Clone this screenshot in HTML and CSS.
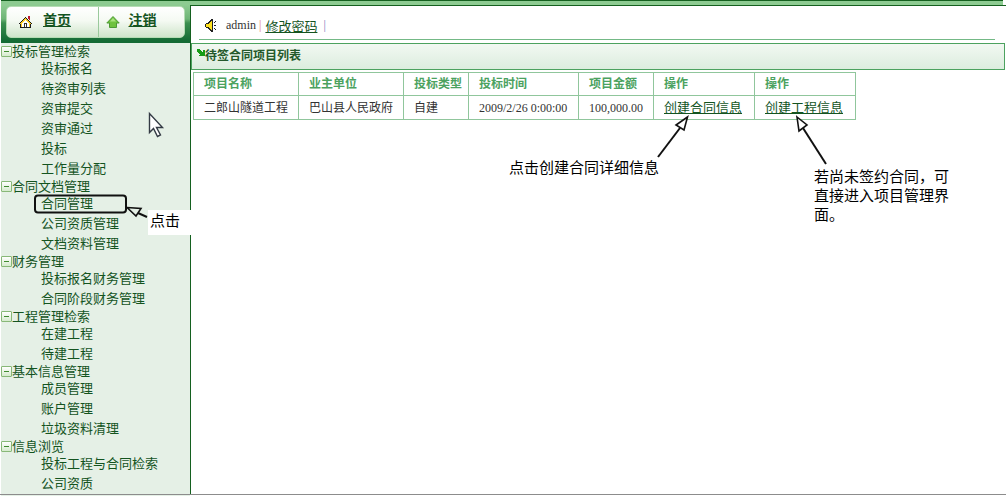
FILE: index.html
```html
<!DOCTYPE html>
<html lang="zh-CN">
<head>
<meta charset="utf-8">
<title>待签合同项目列表</title>
<link rel="stylesheet" href="styles.css">
</head>
<body>
<div class="app">
  <aside class="sidebar">
    <header class="banner">
      <nav class="tabs">
        <a class="tab" href="#">
          <svg class="home-icon" viewBox="0 0 13 12" shape-rendering="crispEdges"><path d="M6 1h1v1h1v1h1v1h1v1h1v1h1v1h1v1h-1v4H1V8H0V7h1V6h1V5h1V4h1V3h1V2h1z" fill="#1c1c1c"/><path d="M6 2h1v1h1v1h1v1h1v1h1v1h1v1h-1v3H2V8H1V7h1V6h1V5h1V4h1V3h1z" fill="#ffcf24"/><path d="M6 4h1v1h1v1h1v1h1v4H3V7h1V6h1V5h1z" fill="#fff"/><path d="M5 7h3v4H7V8H6v3H5z" fill="#333"/><path d="M9 0h2v4h-1V3H9z" fill="#c01830"/></svg>
          <span class="tab-text">首页</span>
        </a>
        <a class="tab" href="#">
          <svg class="up-icon" viewBox="0 0 14 12"><path d="M7 .5 13.200 7H10.500v4.500h-7V7H.8z" fill="#6fc23f" stroke="#4c9a34"/><path d="M7 2 10 5.500H4z" fill="#a9e37f"/></svg>
          <span class="tab-text">注销</span>
        </a>
      </nav>
    </header>
    <nav class="tree">
      <section><h2><button class="fold" aria-label="折叠"></button>投标管理检索</h2>
        <ul><li><a href="#">投标报名</a></li><li><a href="#">待资审列表</a></li><li><a href="#">资审提交</a></li><li><a href="#">资审通过</a></li><li><a href="#">投标</a></li><li><a href="#">工作量分配</a></li></ul></section>
      <section><h2><button class="fold" aria-label="折叠"></button>合同文档管理</h2>
        <ul><li><a class="current" href="#">合同管理</a></li><li><a href="#">公司资质管理</a></li><li><a href="#">文档资料管理</a></li></ul></section>
      <section><h2><button class="fold" aria-label="折叠"></button>财务管理</h2>
        <ul><li><a href="#">投标报名财务管理</a></li><li><a href="#">合同阶段财务管理</a></li></ul></section>
      <section><h2><button class="fold" aria-label="折叠"></button>工程管理检索</h2>
        <ul><li><a href="#">在建工程</a></li><li><a href="#">待建工程</a></li></ul></section>
      <section><h2><button class="fold" aria-label="折叠"></button>基本信息管理</h2>
        <ul><li><a href="#">成员管理</a></li><li><a href="#">账户管理</a></li><li><a href="#">垃圾资料清理</a></li></ul></section>
      <section><h2><button class="fold" aria-label="折叠"></button>信息浏览</h2>
        <ul><li><a href="#">投标工程与合同检索</a></li><li><a href="#">公司资质</a></li></ul></section>
    </nav>
  </aside>
  <div class="content">
    <div class="strip"></div>
    <main class="panel">
      <div class="userbar">
        <svg class="speaker" viewBox="0 0 13 13" shape-rendering="crispEdges"><path d="M6 0h2v13H6v-1H5v-1H4v-1H3V9H1V8H0V5h1V4h2V3h1V2h1V1h1z" fill="#222"/><path d="M6 2h1v9H6v-1H5V9H4V8H1V5h3V4h1V3h1z" fill="#ffe11f"/><path d="M9 3h1v1H9zM10 2h1v1h-1zM9 6h2v1H9zM9 9h1v1H9zM10 10h1v1h-1z" fill="#222"/></svg>
        <span>admin</span><span class="bar pink">|</span><a class="link" href="#">修改密码</a><span class="bar last">|</span>
      </div>
      <h1 class="title"><svg class="title-icon" viewBox="0 0 8 8" shape-rendering="crispEdges"><path d="M0 0h3v1h1v1h1v1h1V1h2v6H2V6h1V5H2V4H1V3H0z" fill="#169c16"/></svg>待签合同项目列表</h1>
      <table class="projects">
        <colgroup><col class="w-name"><col class="w-name"><col class="w-type"><col class="w-time"><col class="w-sum"><col class="w-act"><col class="w-act"></colgroup>
        <thead><tr><th>项目名称</th><th>业主单位</th><th>投标类型</th><th>投标时间</th><th>项目金额</th><th>操作</th><th>操作</th></tr></thead>
        <tbody><tr><td>二郎山隧道工程</td><td>巴山县人民政府</td><td>自建</td><td>2009/2/26 0:00:00</td><td>100,000.00</td><td><a class="link" href="#">创建合同信息</a></td><td><a class="link" href="#">创建工程信息</a></td></tr></tbody>
      </table>
    </main>
  </div>
  <div class="note note-click">点击</div>
  <div class="note note-detail">点击创建合同详细信息</div>
  <div class="note note-direct">若尚未签约合同，可直接进入项目管理界面。</div>
  <svg class="marks" width="860" height="240" viewBox="0 0 860 240" fill="none" stroke="#111" stroke-width="2">
    <rect x="35" y="195.500" width="91" height="17" rx="3"/>
    <path d="M147 217 138 213"/><path d="M127 207.500 141 208.500 136 216z" fill="#e5f0e6" stroke-width="1.600"/>
    <path d="M658 157 680 128"/><path d="M687.500 117 684 130 676 125z" fill="#fff" stroke-width="1.600"/>
    <path d="M826 164 803 128"/><path d="M797 117 807 125 799 131z" fill="#fff" stroke-width="1.600"/>
    <path d="M149.500 113.500v19l4-4 4 8 3-1.500-4-7.500h6z" fill="#fff" stroke="#333a44" stroke-width="1.400"/>
  </svg>
</div>
</body>
</html>
```
FILE: styles.css
```css
* { box-sizing: border-box; }
body { margin: 0; background: #fff; font-family: "Liberation Serif", "Noto Sans CJK SC", serif; font-size: 12px; color: #333; }
h1, h2, ul { margin: 0; padding: 0; font-weight: normal; }
ul { list-style: none; }
a { color: #14541f; text-decoration: none; }
.app { position: relative; display: flex; min-height: 100vh; }
.app::after { content: ""; position: absolute; left: 0; right: 0; bottom: 1px; height: 1px; background: #8c8c8c; }
.sidebar { flex: 0 0 190px; background: #e5f0e6; padding-bottom: 1px; border-left: 1px solid #fff; }
.banner { height: 43px; padding: 5px 5px 0; border-top: 1px solid #14601f; background: linear-gradient(#8dcb91 0, #8dcb91 4px, #6fb577 18px, #3c8f50 22px, #146b35 40px); }
.tabs { display: flex; height: 32px; border: 1px solid #b5dcb4; border-radius: 5px; background: linear-gradient(#fff, #f5faf3 45%, #cfe5cb); }
.tab { flex: 1; display: flex; align-items: center; padding-left: 12px; gap: 11px; }
.tab + .tab { border-left: 1px solid #9ac99c; padding-left: 7px; gap: 9px; }
.tab-text { font-size: 14px; line-height: 20px; padding-bottom: 2px; font-weight: bold; text-decoration: underline; }
.home-icon { width: 13px; height: 12px; }
.up-icon { width: 14px; height: 12px; }
.tree { padding-top: 1px; }
.tree h2 { display: flex; align-items: center; height: 15px; font-size: 13px; line-height: 15px; color: #14541f; white-space: nowrap; }
.fold { position: relative; flex: none; width: 11px; height: 11px; padding: 0; border: 1px solid #88b878; background: linear-gradient(#fff, #d5ebcd); border-radius: 1px; }
.fold::after { content: ""; position: absolute; left: 2px; right: 2px; top: 4px; height: 1px; background: #3f8a30; }
.tree li { height: 20px; padding-left: 40px; font-size: 13px; line-height: 20px; white-space: nowrap; }
.content { flex: 1; min-width: 0; }
.strip { height: 5px; margin-right: 3px; background: #8dcb91; border-top: 1px solid #14601f; }
.panel { min-height: calc(100vh - 7px); border-left: 1px solid #14601f; border-top: 1px solid #14601f; }
.userbar { display: flex; align-items: center; height: 34px; margin: 0 11px 3px 8px; padding: 6px 0 0 6px; border-bottom: 1px solid #74b986; }
.speaker { width: 13px; height: 13px; margin-right: 8px; }
.bar { margin: 0 4px 0 3px; color: #7b7bbb; }
.bar.pink { color: #e07b7b; }
.bar.last { margin-left: 6px; }
.link { font-size: 13px; text-decoration: underline; }
.title { display: flex; height: 27px; margin-right: 1px; padding: 3px 5px; border: 1px solid #4ca25f; background: linear-gradient(#f2f8f2, #dcedde); font-size: 12px; font-weight: bold; line-height: 18px; color: #24592b; }
.title-icon { width: 8px; height: 8px; margin-top: 2px; }
.projects { width: 663px; margin: 2px 0 0 2px; table-layout: fixed; border-collapse: collapse; }
.projects th, .projects td { padding: 0 10px; border: 1px solid #90c69c; text-align: left; line-height: 18px; white-space: nowrap; }
.projects th { height: 23px; color: #4ca25f; }
.projects td { height: 24px; }
.w-name { width: 105px; }
.w-type { width: 65px; }
.w-time { width: 110px; }
.w-sum { width: 75px; }
.w-act { width: 101px; }
.note { position: absolute; font-size: 15px; line-height: 19px; color: #000; background: #fff; }
.note-click { left: 148px; top: 210px; width: 43px; padding: 2px 2px 4px; }
.note-detail { left: 509px; top: 159px; white-space: nowrap; }
.note-direct { left: 814px; top: 168px; width: 136px; }
.marks { position: absolute; left: 0; top: 0; pointer-events: none; }
```
